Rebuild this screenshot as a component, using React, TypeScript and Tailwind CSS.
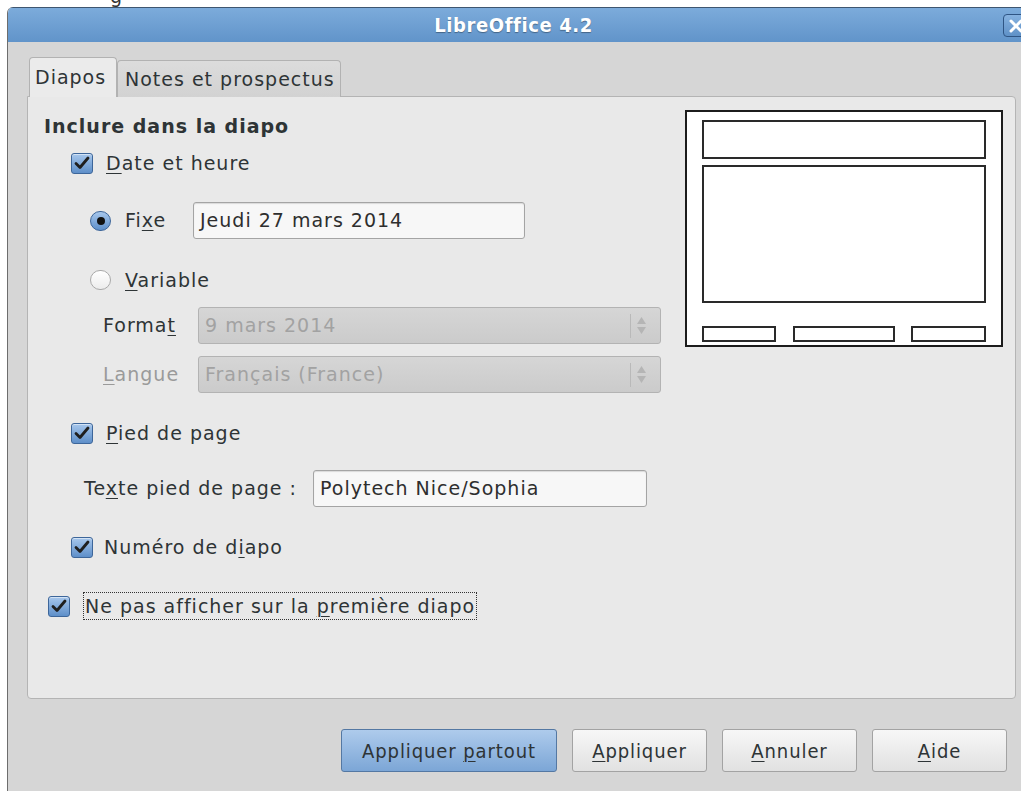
import React from "react";

const SANS = "font-['DejaVu_Sans',sans-serif]";
const COND = "font-['DejaVu_Sans_Condensed','DejaVu_Sans',sans-serif]";

function Mn({ text, at }: { text: string; at: number }) {
  return (
    <span>
      {text.slice(0, at)}
      <span className="underline underline-offset-[3px] decoration-1">{text.charAt(at)}</span>
      {text.slice(at + 1)}
    </span>
  );
}

function CheckBox() {
  return (
    <span className="w-[22px] h-[21px] shrink-0 rounded-[3px] border border-[#3d669a] bg-gradient-to-b from-[#a7c7ec] to-[#5e8fc9] flex items-center justify-center shadow-[inset_0_1px_0_rgba(255,255,255,0.5)]">
      <svg width="16" height="14" viewBox="0 0 16 14">
        <path d="M2 7.5 L6 11.5 L14 2" fill="none" stroke="#1f1f1f" strokeWidth="2.8" strokeLinecap="round" strokeLinejoin="round" />
      </svg>
    </span>
  );
}

function Radio({ on }: { on?: boolean }) {
  return on ? (
    <span className="w-[21px] h-[20px] shrink-0 rounded-full border border-[#3d669a] bg-gradient-to-b from-[#a7c7ec] to-[#5e8fc9] flex items-center justify-center">
      <span className="w-[8px] h-[8px] rounded-full bg-[#111]" />
    </span>
  ) : (
    <span className="w-[21px] h-[20px] shrink-0 rounded-full border border-[#a9a9a9] bg-gradient-to-b from-white to-[#ececec]" />
  );
}

function TextBox({ value, w }: { value: string; w: string }) {
  return (
    <div className={`${w} h-[37px] rounded-[3px] border border-[#a4a4a4] bg-[#f7f7f7] shadow-[inset_0_1px_1px_rgba(0,0,0,0.12)] flex items-center pl-[6px] text-[#2e2e2e]`}>
      {value}
    </div>
  );
}

function DisabledSpin({ value }: { value: string }) {
  return (
    <div className="w-[463px] h-[37px] rounded-[3px] border border-[#b3b3b3] bg-gradient-to-b from-[#d6d6d6] to-[#cbcbcb] flex items-center pl-[6px] text-[#a2a2a2]">
      <span className="flex-1">{value}</span>
      <span className="w-px h-[24px] bg-[#b9b9b9] mr-[6px]" />
      <span className="flex flex-col items-center mr-[14px] text-[#b5b5b5]">
        <svg width="9" height="7" viewBox="0 0 9 7"><path d="M4.5 0 L9 7 L0 7 Z" fill="currentColor" /></svg>
        <span className="h-[3px]" />
        <svg width="9" height="7" viewBox="0 0 9 7"><path d="M0 0 L9 0 L4.5 7 Z" fill="currentColor" /></svg>
      </span>
    </div>
  );
}

function Button({ children, primary, w }: { children: React.ReactNode; primary?: boolean; w: string }) {
  return (
    <div
      className={`${w} h-[43px] rounded-[3px] border flex items-center justify-center ${COND} text-[20px] tracking-[0.9px] text-[#2e3436] ${
        primary
          ? "border-[#5478a3] bg-gradient-to-b from-[#aecbec] to-[#7ca6d6]"
          : "border-[#a3a3a3] bg-gradient-to-b from-[#f7f7f7] to-[#e1e1e1]"
      }`}
    >
      {children}
    </div>
  );
}

function SlidePreview() {
  return (
    <div className="w-[318px] h-[237px] border-2 border-[#1c1c1c] bg-white pt-[8px] px-[15px] flex flex-col">
      <div className="h-[39px] border-2 border-[#2a2a2a]" />
      <div className="mt-[6px] h-[138px] border-2 border-[#2a2a2a]" />
      <div className="mt-[23px] flex justify-between">
        <div className="w-[74px] h-[16px] border-2 border-[#2a2a2a]" />
        <div className="w-[102px] h-[16px] border-2 border-[#2a2a2a]" />
        <div className="w-[75px] h-[16px] border-2 border-[#2a2a2a]" />
      </div>
    </div>
  );
}

export default function App() {
  return (
    <div className={`w-[1021px] h-[791px] overflow-hidden bg-white ${SANS} text-[19px] tracking-[1px] text-[#2e3436]`}>
      {/* descender of the line above the window */}
      <div className="h-[7px] overflow-hidden pl-[110px]">
        <span className="block leading-[20px] -mt-[14px] text-[#333]">g</span>
      </div>

      <div className="ml-[7px] w-[1040px] h-[784px] flex flex-col border-l border-[#6d6d6d] rounded-tl-[6px] overflow-hidden">
        {/* title bar */}
        <div className="h-[35px] shrink-0 border-t border-[#3e5670] bg-gradient-to-b from-[#7cabdb] to-[#6194ca] flex items-center relative">
          <div className={`flex-1 text-center pr-[28px] text-white font-bold ${COND} text-[20px] tracking-[0.6px] [text-shadow:0_1px_1px_rgba(0,0,0,0.35)]`}>
            LibreOffice 4.2
          </div>
          <div className="absolute left-[995px] top-[6px] w-[26px] h-[23px] rounded-[4px] border border-[#2f5584] bg-gradient-to-b from-[#86b2e0] to-[#5f91c7] flex items-center justify-center">
            <svg width="14" height="14" viewBox="0 0 14 14">
              <path d="M2 2 L12 12 M12 2 L2 12" stroke="white" strokeWidth="3" strokeLinecap="round" />
            </svg>
          </div>
        </div>

        {/* dialog body */}
        <div className="flex-1 bg-[#d6d6d6] pl-[19px] pt-[15px]">
          {/* tabs */}
          <div className="flex items-end ml-[2px] relative z-10 -mb-px">
            <div className="w-[88px] h-[40px] rounded-t-[4px] border border-b-0 border-[#b2b2b2] bg-[#ebebeb] flex items-center pl-[5px] text-[#2e3436]">
              Diapos
            </div>
            <div className="w-[224px] h-[37px] rounded-t-[4px] border border-b-0 border-[#b2b2b2] bg-gradient-to-b from-[#dcdcdc] to-[#d2d2d2] flex items-center pl-[7px] text-[#2e3436]">
              Notes et prospectus
            </div>
          </div>

          {/* tab page */}
          <div className="w-[989px] h-[603px] rounded-[4px] rounded-tl-none border border-[#b4b4b4] bg-[#e9e9e9] flex">
            <div className="flex-1 flex flex-col">
              <div className="mt-[17px] h-[24px] pl-[16px] flex items-center font-bold">Inclure dans la diapo</div>

              <div className="mt-[13px] h-[24px] pl-[43px] flex items-center">
                <CheckBox />
                <span className="ml-[13px]"><Mn text="Date et heure" at={0} /></span>
              </div>

              <div className="mt-[27px] h-[37px] pl-[62px] flex items-center">
                <Radio on />
                <span className="ml-[14px] w-[68px]"><Mn text="Fixe" at={2} /></span>
                <TextBox value="Jeudi 27 mars 2014" w="w-[332px]" />
              </div>

              <div className="mt-[29px] h-[24px] pl-[62px] flex items-center">
                <Radio />
                <span className="ml-[14px]"><Mn text="Variable" at={0} /></span>
              </div>

              <div className="mt-[15px] h-[37px] pl-[75px] flex items-center">
                <span className="w-[95px]"><Mn text="Format" at={5} /></span>
                <DisabledSpin value="9 mars 2014" />
              </div>

              <div className="mt-[12px] h-[37px] pl-[75px] flex items-center">
                <span className="w-[95px] text-[#9a9a9a]"><Mn text="Langue" at={0} /></span>
                <DisabledSpin value="Français (France)" />
              </div>

              <div className="mt-[28px] h-[24px] pl-[43px] flex items-center">
                <CheckBox />
                <span className="ml-[13px]"><Mn text="Pied de page" at={0} /></span>
              </div>

              <div className="mt-[25px] h-[37px] pl-[56px] flex items-center">
                <span className="w-[229px]"><Mn text="Texte pied de page :" at={2} /></span>
                <TextBox value="Polytech Nice/Sophia" w="w-[334px]" />
              </div>

              <div className="mt-[28px] h-[24px] pl-[43px] flex items-center">
                <CheckBox />
                <span className="ml-[11px]"><Mn text="Numéro de diapo" at={11} /></span>
              </div>

              <div className="mt-[33px] h-[28px] pl-[20px] flex items-center">
                <CheckBox />
                <span className="ml-[13px] h-[28px] px-[1px] flex items-center border border-dotted border-[#333]">
                  <Mn text="Ne pas afficher sur la première diapo" at={23} />
                </span>
              </div>
            </div>

            <div className="mt-[13px] mr-[12px]">
              <SlidePreview />
            </div>
          </div>

          {/* buttons */}
          <div className="w-[989px] mt-[30px] pr-[9px] flex justify-end gap-[15px]">
            <Button primary w="w-[216px]"><span>Appliquer <Mn text="partout" at={0} /></span></Button>
            <Button w="w-[135px]"><Mn text="Appliquer" at={0} /></Button>
            <Button w="w-[135px]"><Mn text="Annuler" at={0} /></Button>
            <Button w="w-[135px]"><Mn text="Aide" at={0} /></Button>
          </div>
        </div>
      </div>
    </div>
  );
}
